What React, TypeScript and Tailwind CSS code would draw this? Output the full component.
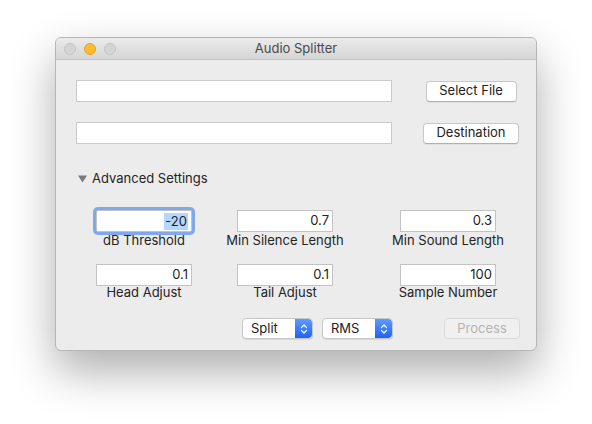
import React from 'react';

const font = { fontFamily: 'Inter, "Liberation Sans", sans-serif' };

function Field({ value, focused }: { value: string; focused?: boolean }) {
  return (
    <div
      className={`w-[96px] h-[22px] bg-white border border-[#c3c3c3] flex items-center justify-end pr-[3px] text-[13px] text-[#232323] ${
        focused ? 'ring-[3px] ring-[#80a9ec] rounded-[2px] border-[#9bb9ee]' : ''
      }`}
    >
      {focused ? <span className="bg-[#b3d7ff] px-[1px] leading-[17px]">{value}</span> : value}
    </div>
  );
}

function Stepper() {
  return (
    <div className="w-[17px] h-full rounded-r-[4px] bg-gradient-to-b from-[#5a9bfd] to-[#1d63f4] flex items-center justify-center">
      <svg width="8" height="12" viewBox="0 0 8 12" fill="none" stroke="white" strokeWidth="1.3" strokeLinecap="round" strokeLinejoin="round">
        <path d="M1.5 4.5 L4 2 L6.5 4.5" />
        <path d="M1.5 7.5 L4 10 L6.5 7.5" />
      </svg>
    </div>
  );
}

function Popup({ label }: { label: string }) {
  return (
    <div className="w-[71px] h-[21px] flex bg-white rounded-[4px] border border-[#c6c6c6] shadow-[0_1px_0_rgba(0,0,0,0.08)] overflow-hidden">
      <div className="flex-1 flex items-center pl-[8px] text-[13px] text-[#222]">{label}</div>
      <Stepper />
    </div>
  );
}

function Button({ label, w, disabled }: { label: string; w: string; disabled?: boolean }) {
  return (
    <div
      className={`${w} h-[21px] rounded-[4px] flex items-center justify-center text-[13px] ${
        disabled
          ? 'bg-[#f0f0f0] border border-[#dadada] text-[#b4b4b4]'
          : 'bg-white border border-[#c8c8c8] border-b-[#b0b0b0] text-[#222] shadow-[0_1px_0_rgba(0,0,0,0.05)]'
      }`}
    >
      {label}
    </div>
  );
}

function Cell({ value, label, focused, tight }: { value: string; label: string; focused?: boolean; tight?: boolean }) {
  return (
    <div className="w-[140px] flex flex-col items-center">
      <Field value={value} focused={focused} />
      <div className={`text-[13px] text-[#242424] leading-[16px] ${tight ? 'mt-[-2px]' : 'mt-0'}`}>{label}</div>
    </div>
  );
}

export default function App() {
  return (
    <div className="w-[592px] h-[424px] bg-white pt-[37px] pl-[55px]" style={font}>
      <div className="w-[482px] h-[314px] rounded-[6px] bg-[#ececec] border border-[#b6b6b6] shadow-[0_20px_45px_rgba(0,0,0,0.32)] overflow-hidden flex flex-col">
        {/* title bar */}
        <div className="h-[22px] shrink-0 bg-gradient-to-b from-[#ebebeb] to-[#d5d5d5] border-b border-[#c2c2c2] flex items-center relative">
          <div className="flex gap-[8px] pl-[8px]">
            <div className="w-[12px] h-[12px] rounded-full bg-[#d4d4d4] border border-[#c3c3c3]" />
            <div className="w-[12px] h-[12px] rounded-full bg-[#fdbc2e] border border-[#e0a424]" />
            <div className="w-[12px] h-[12px] rounded-full bg-[#d4d4d4] border border-[#c3c3c3]" />
          </div>
          <div className="absolute inset-0 flex items-center justify-center text-[13px] text-[#4a4a4a]">Audio Splitter</div>
        </div>

        <div className="flex flex-col pt-[20px]">
          <div className="flex items-center pl-[20px]">
            <div className="w-[316px] h-[22px] bg-white border border-[#cacaca]" />
            <div className="w-[96px] ml-[31px] flex justify-center">
              <Button label="Select File" w="w-[91px]" />
            </div>
          </div>
          <div className="flex items-center pl-[20px] mt-[20px]">
            <div className="w-[316px] h-[22px] bg-white border border-[#cacaca]" />
            <div className="w-[96px] ml-[31px] flex justify-center">
              <Button label="Destination" w="w-[96px]" />
            </div>
          </div>

          <div className="flex items-center pl-[22px] mt-[27px] h-[16px] text-[13px] text-[#242424]">
            <svg width="9" height="8" viewBox="0 0 9 8" className="mr-[5px]">
              <path d="M0 0.5 H9 L4.5 7.5 Z" fill="#7a7a7a" />
            </svg>
            Advanced Settings
          </div>

          <div className="flex mt-[23px] pl-[18px]">
            <Cell value="-20" label="dB Threshold" focused />
            <div className="ml-[1px]">
              <Cell value="0.7" label="Min Silence Length" />
            </div>
            <div className="ml-[23px]">
              <Cell value="0.3" label="Min Sound Length" />
            </div>
          </div>

          <div className="flex mt-[16px] pl-[18px]">
            <Cell value="0.1" label="Head Adjust" tight />
            <div className="ml-[1px]">
              <Cell value="0.1" label="Tail Adjust" tight />
            </div>
            <div className="ml-[23px]">
              <Cell value="100" label="Sample Number" tight />
            </div>
          </div>

          <div className="flex items-center mt-[18px]">
            <div className="ml-[186px]">
              <Popup label="Split" />
            </div>
            <div className="ml-[9px]">
              <Popup label="RMS" />
            </div>
            <div className="ml-[51px]">
              <Button label="Process" w="w-[76px]" disabled />
            </div>
          </div>
        </div>
      </div>
    </div>
  );
}
